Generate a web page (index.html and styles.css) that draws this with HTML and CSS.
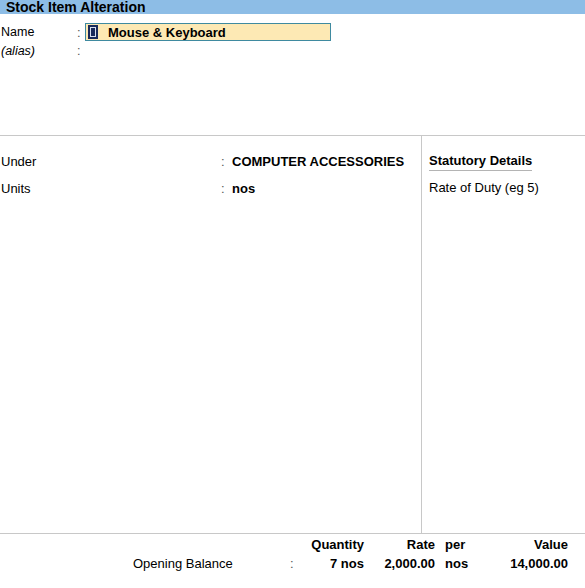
FILE: index.html
```html
<!DOCTYPE html>
<html>
<head>
<meta charset="utf-8">
<link rel="stylesheet" href="styles.css">
</head>
<body>
<div class="page">
  <div class="titlebar">Stock Item Alteration</div>
  <div class="top">
    <div class="row name-row">
      <span class="lbl">Name</span>
      <span class="colon">:</span>
      <div class="input"><span class="cursor"></span><span class="val">Mouse &amp; Keyboard</span></div>
    </div>
    <div class="row alias-row">
      <span class="lbl italic">(alias)</span>
      <span class="colon">:</span>
    </div>
  </div>
  <div class="middle">
    <div class="left">
      <div class="frow">
        <span class="flbl">Under</span>
        <span class="fcolon">:</span>
        <span class="fval">COMPUTER ACCESSORIES</span>
      </div>
      <div class="frow">
        <span class="flbl">Units</span>
        <span class="fcolon">:</span>
        <span class="fval">nos</span>
      </div>
    </div>
    <div class="right">
      <div class="stat-head">Statutory Details</div>
      <div class="stat-row">Rate of Duty (eg 5)</div>
    </div>
  </div>
  <div class="bottom">
    <div class="brow head">
      <span class="b-lbl"></span>
      <span class="b-colon"></span>
      <span class="b-qty">Quantity</span>
      <span class="b-rate">Rate</span>
      <span class="b-per">per</span>
      <span class="b-val">Value</span>
    </div>
    <div class="brow">
      <span class="b-lbl normal">Opening Balance</span>
      <span class="b-colon normal">:</span>
      <span class="b-qty">7 nos</span>
      <span class="b-rate">2,000.00</span>
      <span class="b-per">nos</span>
      <span class="b-val">14,000.00</span>
    </div>
  </div>
</div>
</body>
</html>
```
FILE: styles.css
```css
* { box-sizing: border-box; }
html, body { margin: 0; padding: 0; background: #fff; }
body {
  font-family: "Liberation Sans", Arial, sans-serif;
  font-size: 13px;
  color: #000;
  width: 585px;
  height: 588px;
  overflow: hidden;
}
.page { display: flex; flex-direction: column; height: 588px; }
.titlebar {
  height: 14px;
  background: #8dbde6;
  font-weight: bold;
  font-size: 14px;
  line-height: 14px;
  padding-left: 6px;
}
.top {
  height: 122px;
  padding-top: 9px;
  border-bottom: 1px solid #c8c8c8;
}
.row { display: flex; align-items: center; }
.name-row { height: 18px; }
.alias-row { height: 17px; margin-top: 1px; font-size: 12.5px; }
.name-row .lbl { font-size: 12.5px; }
.lbl { width: 77px; padding-left: 1px; }
.italic { font-style: italic; }
.colon { width: 8px; color: #555; }
.input {
  width: 246px;
  height: 18px;
  background: #fde9b4;
  border: 1px solid #3f8aa0;
  display: flex;
  align-items: center;
  padding-left: 2px;
}
.cursor {
  width: 10px;
  height: 14px;
  background: #1a2a5a;
  border: 2px solid #1a2a5a;
  box-shadow: inset 0 0 0 1px #d8e0f0;
  margin-right: 10px;
}
.val { font-weight: bold; font-size: 13px; }
.middle { flex: 1; display: flex; border-bottom: 1px solid #c8c8c8; }
.left { width: 422px; border-right: 1px solid #c8c8c8; padding-top: 12px; }
.frow { display: flex; height: 27px; align-items: center; }
.flbl { width: 221px; padding-left: 1px; }
.fcolon { width: 11px; color: #555; }
.fval { font-weight: bold; }
.right { flex: 1; padding-top: 15px; padding-left: 7px; }
.stat-head {
  display: inline-block;
  font-weight: bold;
  height: 20px;
  line-height: 20px;
  border-bottom: 1px solid #b4b4b4;
}
.stat-row { height: 20px; margin-top: 7px; line-height: 20px; }
.bottom { height: 54px; padding-top: 1px; }
.brow {
  display: grid;
  grid-template-columns: 133px 157px 8px 66px 71px 10px 60px 63px;
  height: 19px;
  align-items: center;
  font-weight: bold;
}
.brow > span:nth-child(1) { grid-column: 2; }
.brow > span:nth-child(2) { grid-column: 3; }
.brow > span:nth-child(3) { grid-column: 4; text-align: right; }
.brow > span:nth-child(4) { grid-column: 5; text-align: right; }
.brow > span:nth-child(5) { grid-column: 7; }
.brow > span:nth-child(6) { grid-column: 8; text-align: right; }
.normal { font-weight: normal; }
.b-colon { color: #555; }
```
